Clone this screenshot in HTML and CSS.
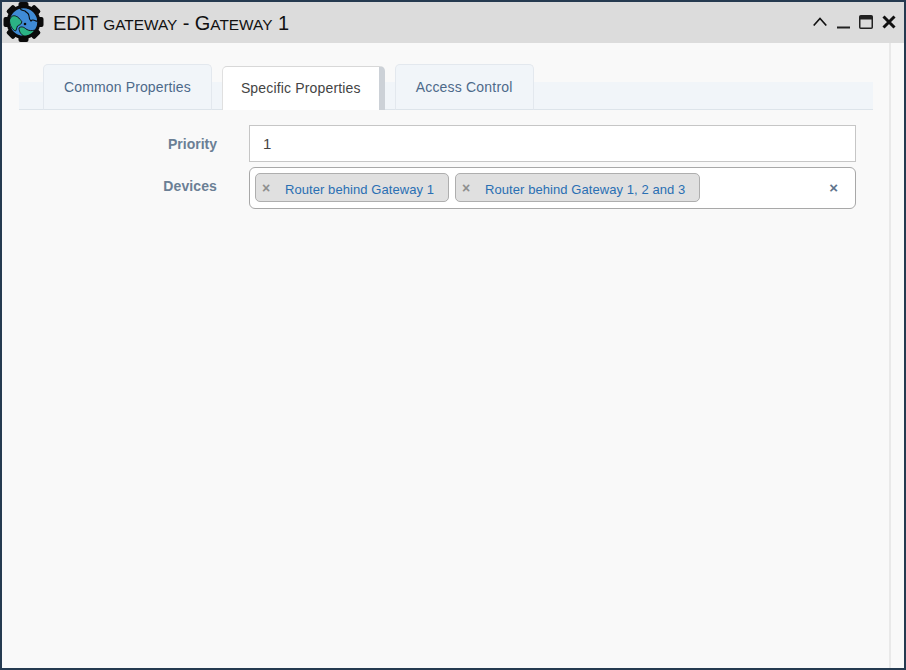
FILE: index.html
```html
<!DOCTYPE html>
<html lang="en">
<head>
    <meta charset="UTF-8">
    <meta name="viewport" content="width=device-width, initial-scale=1.0">
    <title>Edit gateway</title>
    <link rel="stylesheet" href="styles.css">
</head>
<body>
    <div class="window">
        <div class="header">
            <svg class="logo" viewBox="0 0 44 44">
                <g fill="#0b0b0b">
                    <circle cx="21.5" cy="22" r="17"/>
                    <rect x="16.5" y="2" width="10" height="40" rx="2"/>
                    <rect x="16.5" y="2" width="10" height="40" rx="2" transform="rotate(45 21.5 22)"/>
                    <rect x="16.5" y="2" width="10" height="40" rx="2" transform="rotate(90 21.5 22)"/>
                    <rect x="16.5" y="2" width="10" height="40" rx="2" transform="rotate(135 21.5 22)"/>
                </g>
                <circle cx="21.5" cy="22" r="14.5" fill="#3f8bd6"/>
                <path d="M7.5 20c1-3 3-5 6-4 2 1 3 1 4 3 1 1 3 2 2 4-1 2-3 2-4 3-1 2-1 4-2 5-3-1-6-6-6-11z" fill="#2bb385" stroke="#0b0b0b" stroke-width=".9"/>
                <path d="M18 8c1 3 3 2 5 3 2 2 4 2 4 5 0 2 1 4 2 5 1-2 3-1 5 0 1 1 2-1 2-3" fill="none" stroke="#0b0b0b" stroke-width="1.1"/>
                <path d="M17 28c2-2 5-1 7 1 3 2 6 2 9 1-2 4-6 6.500-10 6.500-3-1-6-4-6-8.500z" fill="#2bb385" stroke="#0b0b0b" stroke-width=".9"/>
                <circle cx="23" cy="24" r="1.3" fill="#0b0b0b"/>
                <circle cx="21.5" cy="22" r="14.5" fill="none" stroke="#0b0b0b" stroke-width="1.5"/>
            </svg>
            <div class="title">EDIT <span class="small">gateway</span> - G<span class="small">ateway</span> 1</div>
            <div class="controls">
                <svg width="14" height="9" viewBox="0 0 14 9"><path d="M.7 8.5l6.3-7 6.3 7" fill="none" stroke="#111" stroke-width="1.6"/></svg>
                <svg width="13" height="14" viewBox="0 0 13 14"><rect x="0" y="11.500" width="13" height="2" fill="#222"/></svg>
                <svg width="14" height="14" viewBox="0 0 14 14"><rect x=".75" y=".75" width="12.5" height="12.5" rx="1" fill="none" stroke="#222" stroke-width="1.5"/><rect x="1" y="1" width="12" height="3.5" fill="#222"/></svg>
                <svg width="14" height="14" viewBox="0 0 14 14"><path d="M1.5 1.5l11 11M12.5 1.5l-11 11" fill="none" stroke="#111" stroke-width="3"/></svg>
            </div>
        </div>
        <div class="content">
            <div class="main">
                <div class="tabs">
                    <div class="tab">Common Properties</div>
                    <div class="tab active">Specific Properties</div>
                    <div class="tab">Access Control</div>
                </div>
                <div class="form">
                    <label class="priority-label">Priority</label>
                    <div class="input">1</div>
                    <label class="devices-label">Devices</label>
                    <div class="select">
                        <div class="chip"><span class="chip-x">×</span><span class="chip-text">Router behind Gateway 1</span></div>
                        <div class="chip"><span class="chip-x">×</span><span class="chip-text">Router behind Gateway 1, 2 and 3</span></div>
                        <span class="clear">×</span>
                    </div>
                </div>
            </div>
            <div class="scrollbar"></div>
        </div>
    </div>
</body>
</html>
```

FILE: styles.css
```css
* {
    box-sizing: border-box;
}
html, body {
    height: 100%;
}
body {
    margin: 0;
    font-family: "Liberation Sans", Arial, sans-serif;
    font-size: 14px;
    background: #f9f9f9;
}
.window {
    height: 670px;
    display: flex;
    flex-direction: column;
    border: 2px solid #253a50;
}
.header {
    height: 41px;
    flex: none;
    display: flex;
    align-items: center;
    background: #dcdcdc;
}
.logo {
    width: 44px;
    height: 44px;
    flex: none;
    margin-top: -1px;
}
.title {
    margin-left: 7px;
    margin-top: 2px;
    font-size: 20px;
    color: #111;
    letter-spacing: -0.1px;
}
.title .small {
    font-size: 15.4px;
    text-transform: uppercase;
    letter-spacing: 0;
}
.controls {
    margin-left: auto;
    margin-right: 8px;
    margin-top: -2px;
    display: flex;
    align-items: center;
    gap: 9px;
}
.controls svg:nth-child(2) {
    margin-left: 1px;
}
.content {
    flex: 1;
    display: flex;
}
.main {
    flex: 1;
    padding: 21px 16px 0 17px;
}
.scrollbar {
    width: 15px;
    flex: none;
    border-left: 2px solid #e9e9e9;
}
.tabs {
    height: 46px;
    display: flex;
    align-items: flex-end;
    gap: 10px;
    padding-left: 24px;
    border-bottom: 1px solid #dde4ea;
    background: linear-gradient(to bottom, transparent 18px, #f1f5f9 18px);
    letter-spacing: 0.14px;
}
.tab {
    height: 46px;
    margin-bottom: -1px;
    padding: 0 20px 1px;
    display: flex;
    align-items: center;
    color: #4d6a8a;
    background: #f1f5f9;
    border: 1px solid #e3e8ee;
    border-bottom: 1px solid #dde4ea;
    border-radius: 5px 5px 0 0;
}
.tab:last-child {
    padding: 0 20px 1px;
    letter-spacing: 0.2px;
}
.tab.active {
    height: 44px;
    padding: 0 18px 2px;
    letter-spacing: 0.16px;
    color: #444;
    background: #fff;
    border: 0;
    border-top: 1px solid #d8d8d8;
    border-left: 1px solid #e0e0e0;
    border-right: 6px solid #ccd1d7;
}
.form {
    margin-top: 15px;
    display: grid;
    grid-template-columns: 198px 607px;
    column-gap: 32px;
    row-gap: 5px;
}
.form label {
    justify-self: end;
    font-weight: bold;
    color: #6b7f95;
}
.priority-label {
    align-self: center;
}
.devices-label {
    margin-top: 11px;
    letter-spacing: 0.1px;
}
.input {
    height: 37px;
    padding: 0 13px;
    display: flex;
    align-items: center;
    font-size: 15px;
    color: #444;
    background: #fff;
    border: 1px solid #c6c6c6;
}
.select {
    height: 42px;
    padding: 5px;
    display: flex;
    align-items: flex-start;
    gap: 6px;
    background: #fff;
    border: 1px solid #a8a8a8;
    border-radius: 6px;
}
.chip {
    height: 29px;
    display: flex;
    align-items: center;
    background: #e0e0e0;
    border: 1px solid #aeaeae;
    border-radius: 5px;
    font-size: 13px;
    padding-right: 14px;
}
.chip-x {
    width: 29px;
    padding-left: 6px;
    padding-top: 1px;
    font-weight: bold;
    font-size: 14px;
    color: #8e8e8e;
}
.chip-text {
    padding-top: 3px;
    color: #2a6fb3;
    letter-spacing: 0.07px;
}
.clear {
    margin-left: auto;
    margin-right: 12px;
    margin-top: 6px;
    font-weight: bold;
    font-size: 15px;
    color: #60748c;
}
```
